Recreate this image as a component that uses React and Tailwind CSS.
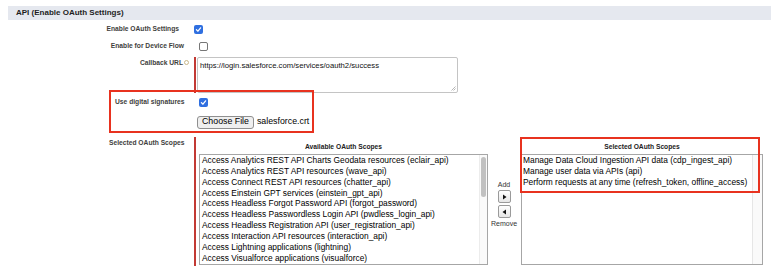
import React from 'react';

const available = [
  'Access Analytics REST API Charts Geodata resources (eclair_api)',
  'Access Analytics REST API resources (wave_api)',
  'Access Connect REST API resources (chatter_api)',
  'Access Einstein GPT services (einstein_gpt_api)',
  'Access Headless Forgot Password API (forgot_password)',
  'Access Headless Passwordless Login API (pwdless_login_api)',
  'Access Headless Registration API (user_registration_api)',
  'Access Interaction API resources (interaction_api)',
  'Access Lightning applications (lightning)',
  'Access Visualforce applications (visualforce)',
];

const selected = [
  'Manage Data Cloud Ingestion API data (cdp_ingest_api)',
  'Manage user data via APIs (api)',
  'Perform requests at any time (refresh_token, offline_access)',
];

function Checkbox({ checked }) {
  if (!checked) {
    return <div className="w-[9px] h-[9px] rounded-[2px] border border-[#767676] bg-white" />;
  }
  return (
    <div className="w-[9px] h-[9px] rounded-[2px] bg-[#2f6fe0] flex items-center justify-center">
      <svg width="7" height="7" viewBox="0 0 10 10">
        <path d="M2 5.2 L4.2 7.4 L8 2.6" fill="none" stroke="white" strokeWidth="1.8" strokeLinecap="round" strokeLinejoin="round" />
      </svg>
    </div>
  );
}

function ArrowButton({ dir }) {
  return (
    <div className="w-[13px] h-[13px] rounded-[2px] border border-[#9a9a9a] bg-gradient-to-b from-white to-[#e6e6e6] flex items-center justify-center">
      <svg width="5" height="6" viewBox="0 0 5 6">
        {dir === 'right' ? <path d="M1 0.5 L4.5 3 L1 5.5 Z" fill="#111" /> : <path d="M4 0.5 L0.5 3 L4 5.5 Z" fill="#111" />}
      </svg>
    </div>
  );
}

export default function App() {
  return (
    <div className="relative w-[779px] h-[276px] overflow-hidden bg-white font-['Liberation_Sans',Arial,sans-serif] text-[#222]">
      {/* Section header */}
      <div className="mx-[8px] mt-[6px] h-[14px] bg-[#e5e8ef] flex items-center pl-[8px] text-[8px] font-bold text-[#1e1e1e]">
        API (Enable OAuth Settings)
      </div>

      {/* Enable OAuth */}
      <div className="mt-[5px] flex items-center h-[9px]">
        <div className="w-[190px] pr-[11px] text-right text-[6.7px] font-bold text-[#3e3e3c]">Enable OAuth Settings</div>
        <div className="ml-[4px]"><Checkbox checked /></div>
      </div>

      {/* Device flow */}
      <div className="mt-[8px] flex items-center h-[9px]">
        <div className="w-[190px] pr-[6px] text-right text-[6.7px] font-bold text-[#3e3e3c]">Enable for Device Flow</div>
        <div className="ml-[9px]"><Checkbox /></div>
      </div>

      {/* Callback URL */}
      <div className="mt-[6px] flex h-[36px]">
        <div className="w-[190px] pt-[1px] flex justify-end items-start">
          <span className="text-[6.7px] font-bold text-[#3e3e3c]">Callback URL</span>
          <span className="ml-[1px] mt-[2px] mr-[1px] w-[5px] h-[5px] rounded-full border border-[#c8b88a]" />
        </div>
        <div className="ml-[4px] w-[2px] bg-[#c23934]" />
        <div className="ml-[1px] w-[261px] border border-[#c4c4c4] rounded-[2px] pl-[2px] pt-[2px] text-[7.7px] text-[#111] relative">
          https://login.salesforce.com/services/oauth2/success
          <svg className="absolute right-[1px] bottom-[1px]" width="5" height="5" viewBox="0 0 5 5">
            <path d="M4.5 0.5 L0.5 4.5 M4.5 2.5 L2.5 4.5" stroke="#999" strokeWidth="0.7" />
          </svg>
        </div>
      </div>

      {/* Digital signatures */}
      <div className="mt-[5px] flex items-center h-[8px]">
        <div className="w-[199px] pl-[115px] text-[6.7px] font-bold text-[#3e3e3c]">Use digital signatures</div>
        <Checkbox checked />
      </div>
      <div className="mt-[10px] flex items-center h-[12px] pl-[197px]">
        <div className="h-[13px] px-[4px] flex items-center rounded-[3px] border border-[#8f8f8f] bg-[#efefef] text-[8.8px] text-black">
          Choose File
        </div>
        <span className="ml-[3px] text-[8.8px] text-black">salesforce.crt</span>
      </div>

      {/* Scopes */}
      <div className="mt-[9px] flex h-[129px]">
        <div className="w-[194px] pl-[109px] pt-[1px] text-[6.7px] font-bold text-[#3e3e3c]">Selected OAuth Scopes</div>
        <div className="w-[2px] bg-[#c23934]" />

        <div className="ml-[3px] w-[289px] flex flex-col">
          <div className="h-[17px] pt-[5px] text-center text-[6.7px] font-bold text-[#222]">Available OAuth Scopes</div>
          <div className="relative h-[111px] border border-[#a6a6a6] bg-white text-[8.4px] leading-[10.85px] text-black">
            <div className="pl-[2px] whitespace-nowrap">
              {available.map((s) => (
                <div key={s}>{s}</div>
              ))}
            </div>
            <div className="absolute right-0 top-0 bottom-0 w-[8px] border-l border-[#ececec] bg-[#fafafa]">
              <div className="mt-[2px] ml-[1px] w-[5px] h-[40px] rounded-full bg-[#c1c1c1]" />
            </div>
          </div>
        </div>

        <div className="ml-[3px] w-[26px] flex flex-col items-center pt-[43px] text-[7px] text-[#333]">
          <span className="leading-[9px]">Add</span>
          <div className="mt-[1px]"><ArrowButton dir="right" /></div>
          <div className="mt-[2px]"><ArrowButton dir="left" /></div>
          <span className="mt-[1px] leading-[9px]">Remove</span>
        </div>

        <div className="ml-[4px] w-[242px] flex flex-col">
          <div className="h-[17px] pt-[5px] text-center text-[6.7px] font-bold text-[#222]">Selected OAuth Scopes</div>
          <div className="relative h-[111px] border border-[#a6a6a6] bg-white text-[8.4px] leading-[10.85px] text-black">
            <div className="pl-[1px] whitespace-nowrap">
              {selected.map((s) => (
                <div key={s}>{s}</div>
              ))}
            </div>
            <div className="absolute right-0 top-0 bottom-0 w-[10px] border-l border-[#e6e6e6] bg-[#fafafa]" />
          </div>
        </div>
      </div>

      {/* Annotation boxes */}
      <div className="absolute left-[109px] top-[90px] w-[205px] h-[43px] border-[2.5px] border-[#e8321f] pointer-events-none" />
      <div className="absolute left-[520px] top-[137px] w-[240px] h-[56px] border-[2.5px] border-[#e8321f] pointer-events-none" />
    </div>
  );
}
